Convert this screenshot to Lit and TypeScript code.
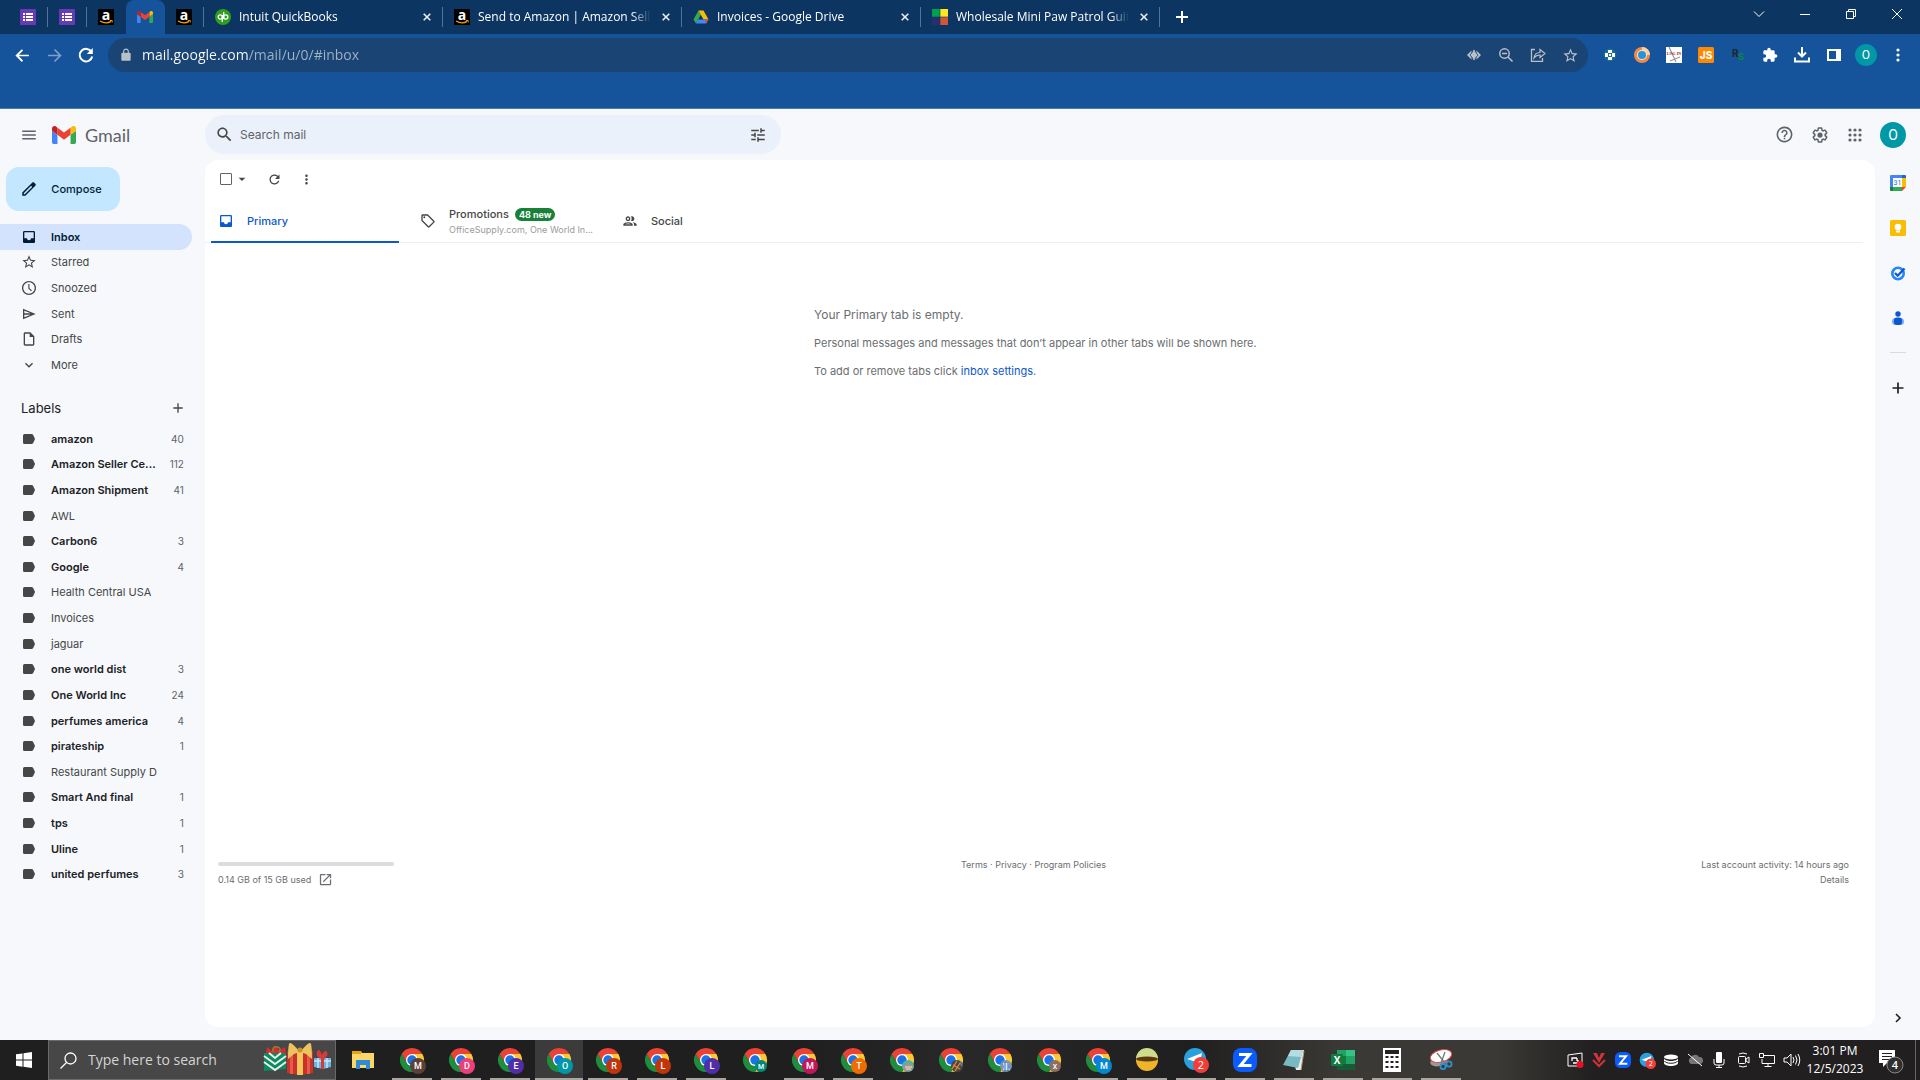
import { LitElement, html, svg, css, nothing } from "lit";
import { customElement } from "lit/decorators.js";

const P = {
  menu: "M3 18h18v-2H3v2zm0-5h18v-2H3v2zm0-7v2h18V6H3z",
  search:
    "M15.5 14h-.79l-.28-.27C15.41 12.59 16 11.11 16 9.5 16 5.91 13.09 3 9.5 3S3 5.91 3 9.5 5.91 16 9.5 16c1.61 0 3.09-.59 4.23-1.57l.27.28v.79l5 4.99L20.49 19l-4.99-5zm-6 0C7.01 14 5 11.99 5 9.5S7.01 5 9.5 5 14 7.01 14 9.5 11.99 14 9.5 14z",
  tune: "M3 17v2h6v-2H3zM3 5v2h10V5H3zm10 16v-2h8v-2h-8v-2h-2v6h2zM7 9v2H3v2h4v2h2V9H7zm14 4v-2H11v2h10zm-6-4h2V7h4V5h-4V3h-2v6z",
  help: "M11 18h2v-2h-2v2zm1-16C6.48 2 2 6.48 2 12s4.48 10 10 10 10-4.48 10-10S17.52 2 12 2zm0 18c-4.41 0-8-3.59-8-8s3.59-8 8-8 8 3.59 8 8-3.59 8-8 8zm0-14c-2.21 0-4 1.79-4 4h2c0-1.1.9-2 2-2s2 .9 2 2c0 2-3 1.75-3 5h2c0-2.25 3-2.5 3-5 0-2.21-1.79-4-4-4z",
  gear: "M13.85 22.25h-3.7c-.74 0-1.36-.54-1.45-1.27l-.27-1.89c-.27-.14-.53-.29-.79-.46l-1.8.72c-.7.26-1.47-.03-1.81-.65L2.2 15.53c-.35-.66-.2-1.44.36-1.88l1.53-1.19c-.01-.15-.02-.3-.02-.46 0-.15.01-.31.02-.46l-1.52-1.19c-.59-.45-.74-1.26-.37-1.88l1.85-3.19c.34-.62 1.11-.9 1.79-.63l1.81.73c.26-.17.52-.32.78-.46l.27-1.91c.09-.7.71-1.25 1.44-1.25h3.7c.74 0 1.36.54 1.45 1.27l.27 1.89c.27.14.53.29.79.46l1.8-.72c.71-.26 1.48.03 1.82.65l1.84 3.18c.36.66.2 1.44-.36 1.88l-1.52 1.19c.01.15.02.3.02.46s-.01.31-.02.46l1.52 1.19c.56.45.72 1.23.37 1.86l-1.86 3.22c-.34.62-1.11.9-1.8.63l-1.8-.72c-.26.17-.52.32-.78.46l-.27 1.91c-.1.68-.72 1.22-1.46 1.22zm-3.23-2h2.76l.37-2.55.53-.22c.44-.18.88-.44 1.34-.78l.45-.34 2.38.96 1.38-2.4-2.03-1.58.07-.56c.03-.26.06-.51.06-.78s-.03-.53-.06-.78l-.07-.56 2.03-1.58-1.39-2.4-2.39.96-.45-.35c-.42-.32-.87-.58-1.33-.77l-.52-.22-.37-2.55h-2.76l-.37 2.55-.53.21c-.44.19-.88.44-1.34.79l-.45.33-2.38-.95-1.39 2.39 2.03 1.58-.07.56a7 7 0 0 0-.06.79c0 .26.02.53.06.78l.07.56-2.03 1.58 1.38 2.4 2.39-.96.45.35c.43.33.86.58 1.33.77l.53.22.38 2.55zM12 8.5a3.5 3.5 0 1 0 0 7 3.5 3.5 0 0 0 0-7z",
  inbox: "M19 3H5c-1.1 0-2 .9-2 2v14c0 1.1.9 2 2 2h14c1.1 0 2-.9 2-2V5c0-1.1-.9-2-2-2zm0 11h-4c0 1.66-1.35 3-3 3s-3-1.34-3-3H5V5h14v9z",
  star: "M22 9.24l-7.19-.62L12 2 9.19 8.63 2 9.24l5.46 4.73L5.82 21 12 17.27 18.18 21l-1.63-7.03L22 9.24zM12 15.4l-3.76 2.27 1-4.28-3.32-2.88 4.38-.38L12 6.1l1.71 4.04 4.38.38-3.32 2.88 1 4.28L12 15.4z",
  clock: "M12 1.5C6.2 1.5 1.5 6.2 1.5 12S6.2 22.5 12 22.5 22.5 17.8 22.5 12 17.8 1.5 12 1.5zm0 19c-4.7 0-8.5-3.8-8.5-8.5S7.3 3.5 12 3.5s8.5 3.8 8.5 8.5-3.8 8.5-8.5 8.5zM12.7 6H11v7l4.2 3.8 1.2-1.3-3.7-3.3z",
  send: "M3 4v16l19-8L3 4zm2 3l9.5 4H5V7zm0 10v-4h9.5L5 17z",
  draft: "M14 2H6c-1.1 0-2 .9-2 2v16c0 1.1.89 2 1.99 2H18c1.1 0 2-.9 2-2V8l-6-6zM6 20V4h7v5h5v11H6z",
  more: "M16.59 8.59L12 13.17 7.41 8.59 6 10l6 6 6-6z",
  plus: "M19 13h-6v6h-2v-6H5v-2h6V5h2v6h6v2z",
  caret: "M7 10l5 5 5-5z",
  refresh: "M17.65 6.35C16.2 4.9 14.21 4 12 4c-4.42 0-7.99 3.58-7.99 8s3.57 8 7.99 8c3.73 0 6.84-2.55 7.73-6h-2.08c-.82 2.33-3.04 4-5.65 4-3.31 0-6-2.69-6-6s2.69-6 6-6c1.66 0 3.14.69 4.22 1.78L13 11h7V4l-2.35 2.35z",
  dots: "M12 8c1.1 0 2-.9 2-2s-.9-2-2-2-2 .9-2 2 .9 2 2 2zm0 2c-1.1 0-2 .9-2 2s.9 2 2 2 2-.9 2-2-.9-2-2-2zm0 6c-1.1 0-2 .9-2 2s.9 2 2 2 2-.9 2-2-.9-2-2-2z",
  tag: "M21.41 11.58l-9-9C12.05 2.22 11.55 2 11 2H4c-1.1 0-2 .9-2 2v7c0 .55.22 1.05.59 1.42l9 9c.36.36.86.58 1.41.58s1.05-.22 1.41-.59l7-7c.37-.36.59-.86.59-1.41s-.23-1.06-.59-1.42zM13 20.01L4 11V4h7v-.01l9 9-7 7.02zM6.5 5a1.5 1.5 0 1 0 0 3 1.5 1.5 0 0 0 0-3z",
  people:
    "M9 13.75c-2.34 0-7 1.17-7 3.5V19h14v-1.75c0-2.33-4.66-3.5-7-3.5zM4.34 17c.84-.58 2.87-1.25 4.66-1.25s3.82.67 4.66 1.25H4.34zM9 12c1.93 0 3.5-1.57 3.5-3.5S10.93 5 9 5 5.5 6.57 5.5 8.5 7.07 12 9 12zm0-5c.83 0 1.5.67 1.5 1.5S9.83 10 9 10s-1.5-.67-1.5-1.5S8.17 7 9 7zm7.04 6.81c1.16.84 1.96 1.96 1.96 3.44V19h4v-1.75c0-2.02-3.5-3.17-5.96-3.44zM15 12c1.93 0 3.5-1.57 3.5-3.5S16.93 5 15 5c-.54 0-1.04.13-1.5.35.63.89 1 1.98 1 3.15s-.37 2.26-1 3.15c.46.22.96.35 1.5.35z",
  open: "M19 19H5V5h7V3H5c-1.11 0-2 .9-2 2v14c0 1.1.89 2 2 2h14c1.1 0 2-.9 2-2v-7h-2v7zM14 3v2h3.59l-9.83 9.83 1.41 1.41L19 6.41V10h2V3h-7z",
  pencil: "M20.41 4.94l-1.35-1.35c-.78-.78-2.05-.78-2.83 0L3 16.82V21h4.18L20.41 7.77c.79-.78.79-2.05 0-2.83zM6.41 19.06L5 19v-1.36l9.82-9.82 1.41 1.41-9.82 9.83z",
  back: "M21 10.8H6.8l6-6L11 3 2 12l9 9 1.8-1.8-6-6H21z",
  lock: "M18 8h-1V6c0-2.76-2.24-5-5-5S7 3.24 7 6v2H6c-1.1 0-2 .9-2 2v10c0 1.1.9 2 2 2h12c1.1 0 2-.9 2-2V10c0-1.1-.9-2-2-2zM9 6c0-1.66 1.34-3 3-3s3 1.34 3 3v2H9V6z",
  puzzle:
    "M20.5 11H19V7c0-1.1-.9-2-2-2h-4V3.5C13 2.12 11.88 1 10.5 1S8 2.12 8 3.5V5H4c-1.1 0-1.99.9-1.99 2v3.8H3.5c1.49 0 2.7 1.21 2.7 2.7s-1.21 2.7-2.7 2.7H2V20c0 1.1.9 2 2 2h3.8v-1.5c0-1.49 1.21-2.7 2.7-2.7 1.49 0 2.7 1.21 2.7 2.7V22H17c1.1 0 2-.9 2-2v-4h1.5c1.38 0 2.5-1.12 2.5-2.5S21.88 11 20.5 11z",
};

const icon = (name: keyof typeof P, size = 16) =>
  html`<svg width=${size} height=${size} viewBox="0 0 24 24" fill="currentColor" aria-hidden="true"><path d=${P[name]} /></svg>`;

const draw = (w: number, h: number, body: unknown) =>
  html`<svg width=${w} height=${h} viewBox="0 0 ${w} ${h}" fill="none" aria-hidden="true">${body}</svg>`;

const gmailMark = (w: number, h: number) => html`<svg width=${w} height=${h} viewBox="52 42 88 66" aria-hidden="true">
  <path fill="#4285f4" d="M58 108h14V74L52 59v43c0 3.32 2.69 6 6 6" />
  <path fill="#34a853" d="M120 108h14c3.32 0 6-2.69 6-6V59l-20 15" />
  <path fill="#fbbc04" d="M120 48v26l20-15v-8c0-7.42-8.47-11.65-14.4-7.2" />
  <path fill="#ea4335" d="M72 74V48l24 18 24-18v26L96 92" />
  <path fill="#c5221f" d="M52 51v8l20 15V48l-5.6-4.2c-5.94-4.45-14.4-.22-14.4 7.2" />
</svg>`;

const forms = draw(16, 16, svg`<rect width="16" height="16" rx="1" fill="#673ab7"/><path d="M3 4h2v2H3zM6 4h7v2H6zM3 7h2v2H3zM6 7h7v2H6zM3 10h2v2H3zM6 10h7v2H6z" fill="#fff"/>`);
const amazon = draw(16, 16, svg`<rect width="16" height="16" fill="#000"/><text x="8" y="11" text-anchor="middle" font-family="Open Sans" font-weight="700" font-size="14" fill="#fff">a</text><path d="M2 12q6 3.6 11 .4" stroke="#f90" stroke-width="1.3"/><path d="M12 11.500h2.200v2" stroke="#f90"/>`);
const quickbooks = draw(16, 16, svg`<circle cx="8" cy="8" r="8" fill="#2ca01c"/><g stroke="#fff" stroke-width="1.3"><circle cx="5.3" cy="8" r="2.1"/><circle cx="10.7" cy="8" r="2.1"/><path d="M7.300 6v7M8.700 3v7"/></g>`);
const drive = draw(16, 16, svg`<path d="M5.500 1.500L.5 10.500l2.500 4 5-9z" fill="#34a853"/><path d="M5.500 1.500h5l5 9h-5z" fill="#fbbc04"/><path d="M5 10.500h10.500l-2.500 4H3z" fill="#4285f4"/><path d="M12.500 10.500h3l-2.500 4z" fill="#ea4335"/>`);
const squares = draw(16, 16, svg`<path d="M0 0h8v8H0z" fill="#00a050"/><path d="M8 0h8v8H8z" fill="#fce91c"/><path d="M0 8h8v8H0z" fill="#27306c"/><path d="M8 8h8v8H8z" fill="#d0553a"/><path d="M0 8h16M8 0v16" stroke="#0c3561" stroke-opacity=".6"/>`);
const closeX = draw(8, 8, svg`<path d="M.7 .7l6.600 6.600M7.300 .7L.7 7.300" stroke="#e8eef5" stroke-width="1.6"/>`);

@customElement("browser-frame")
export class BrowserFrame extends LitElement {
  static styles = css`
    :host { display: block; font-family: "Open Sans", "Noto Sans", sans-serif; color: #fff; }
    button { all: unset; box-sizing: border-box; display: flex; align-items: center; justify-content: center; cursor: pointer; }
    svg { display: block; flex: none; overflow: visible; }
    .strip { display: flex; height: 34px; background: #0c3561; padding-left: 9px; }
    .tab { display: flex; align-items: center; width: 39px; padding-left: 11px; box-sizing: border-box; height: 34px; }
    .tab .edge { width: 1px; height: 20px; background: #56728f; margin-left: auto; }
    .tab.active { background: #15539a; border-radius: 8px 8px 0 0; }
    .tab.wide { width: 239px; }
    .title { flex: 1; margin-left: 8px; font-size: 12px; line-height: 20px; white-space: nowrap; overflow: hidden; min-width: 0; mask-image: linear-gradient(90deg, #000 154px, transparent 173px); }
    .tab.wide .close { width: 16px; height: 16px; margin: 0 7px; }
    .add { width: 44px; }
    .window { margin-left: auto; display: flex; height: 28px; }
    .window button { width: 46px; }
    .bar { display: flex; align-items: center; height: 42px; background: #15539a; padding-left: 6px; }
    .bar > button { width: 32px; height: 32px; }
    .omni { flex: 1; display: flex; align-items: center; height: 34px; border-radius: 17px; background: #194473; margin-left: 6px; padding: 0 2px 0 11px; color: #b9c0c8; }
    .omni button { width: 32px; height: 32px; }
    .url { all: unset; flex: 1; margin-left: 9px; font-size: 14px; line-height: 20px; color: transparent; background: linear-gradient(90deg, #fff 106px, #a3b4c7 106px); background-clip: text; -webkit-background-clip: text; }
    .ext { display: flex; padding: 0 6px; }
    .ext button { width: 32px; height: 32px; }
    .face { width: 22px; height: 22px; border-radius: 50%; background: #0097a7; font-family: Roboto, sans-serif; font-size: 12px; line-height: 22px; text-align: center; }
    .shelf { height: 32px; background: #15539a; border-bottom: 1px solid #4a7ab2; }
  `;

  private tab(glyph: unknown, title: string, state = "") {
    return html`<div class="tab ${title ? "wide" : ""} ${state}">
      ${glyph}
      ${title ? html`<span class="title">${title}</span><button class="close" aria-label="Close tab">${closeX}</button>` : nothing}
      ${state ? nothing : html`<span class="edge"></span>`}
    </div>`;
  }

  render() {
    return html`
      <div class="strip">
        ${this.tab(forms, "")} ${this.tab(forms, "")} ${this.tab(amazon, "", "last")}
        ${this.tab(gmailMark(16, 12), "", "active")} ${this.tab(amazon, "")}
        ${this.tab(quickbooks, "Intuit QuickBooks")} ${this.tab(amazon, "Send to Amazon | Amazon Seller")}
        ${this.tab(drive, "Invoices - Google Drive")} ${this.tab(squares, "Wholesale Mini Paw Patrol Guitar")}
        <button class="add" aria-label="New tab">${draw(12, 12, svg`<path d="M6 0v12M0 6h12" stroke="#fff" stroke-width="2"/>`)}</button>
        <div class="window">
          <button aria-label="Search tabs">${draw(12, 12, svg`<path d="M1 3.500l5 5 5-5" stroke="#fff"/>`)}</button>
          <button aria-label="Minimize">${draw(10, 10, svg`<path d="M0 5.500h10" stroke="#fff"/>`)}</button>
          <button aria-label="Restore">${draw(10, 10, svg`<path d="M.5 2.500h7v7h-7zM2.500 2.500v-2h7v7h-2" stroke="#fff"/>`)}</button>
          <button aria-label="Close">${draw(10, 10, svg`<path d="M0 0l10 10M10 0L0 10" stroke="#fff"/>`)}</button>
        </div>
      </div>
      <div class="bar">
        <button aria-label="Back">${icon("back", 17)}</button>
        <button aria-label="Forward">${draw(17, 17, svg`<path d="M2 8.500h12M8.500 2.500l6 6-6 6" stroke="#7f9fc6" stroke-width="1.7"/>`)}</button>
        <button aria-label="Reload">${draw(16, 16, svg`<path d="M13.500 5A6.300 6.300 0 1 0 14.200 9.500" stroke="#fff" stroke-width="2"/><path d="M14.800 1v6H8.800z" fill="#fff"/>`)}</button>
        <div class="omni">
          ${icon("lock", 14)}
          <input class="url" aria-label="Address" value="mail.google.com/mail/u/0/#inbox" />
          <button aria-label="Tracking">${draw(14, 12, svg`<path d="M0 6l4.500-4.500v9zM14 6L9.500 1.500v9z" fill="currentColor"/><path d="M7 1l4 5-4 5-4-5z" fill="currentColor" stroke="#194473" stroke-width=".8"/><path d="M7 .5l1.500 2h-3zM7 11.500l1.500-2h-3z" fill="currentColor"/>`)}</button>
          <button aria-label="Zoom">${draw(14, 14, svg`<circle cx="5.5" cy="5.5" r="4.7" stroke="currentColor" stroke-width="1.5"/><path d="M9 9l4.500 4.500M3 5.500h5" stroke="currentColor" stroke-width="1.5"/>`)}</button>
          <button aria-label="Share">${draw(16, 14, svg`<path d="M5 1.500H1.500v11.800h11V10" stroke="currentColor" stroke-width="1.3"/><path d="M4 10c.5-4 3-5.500 6-5.500V1.500L15 5.500l-5 4V7C7 7 5.500 8 4 10z" stroke="currentColor" stroke-width="1.2"/>`)}</button>
          <button aria-label="Bookmark">${icon("star", 17)}</button>
        </div>
        <div class="ext">
          <button aria-label="Extension">${draw(16, 16, svg`<circle cx="8" cy="8" r="6.5" fill="#1b6b93"/><path d="M6 3h4v3h3v4h-3v3H6v-3H3V6h3z" fill="#fff"/><path d="M6 6h4v4H6z" fill="#1b6b93"/><path d="M7 7h2v2H7z" fill="#fff"/>`)}</button>
          <button aria-label="Extension">${draw(16, 16, svg`<circle cx="8" cy="8" r="8" fill="#f08a4b"/><path d="M8 0a8 8 0 0 1 8 8H12a4 4 0 0 0-4-4z" fill="#ffd0a0"/><circle cx="8" cy="8" r="5" fill="#ffe2c8"/><circle cx="8" cy="8" r="4" fill="#2196d8"/>`)}</button>
          <button aria-label="Log in">${draw(16, 16, svg`<rect width="16" height="16" fill="#fff"/><path d="M3 0l7 15M4 14l10-4" stroke="#999" stroke-width="1.2"/><text x="8" y="8" text-anchor="middle" font-family="Liberation Serif" font-weight="700" font-size="4" fill="#8c2020">LOG IN</text>`)}</button>
          <button aria-label="Extension">${draw(16, 16, svg`<rect width="16" height="16" rx="1.5" fill="#ff8800"/><text x="8" y="12" text-anchor="middle" font-family="Inter" font-weight="800" font-size="10" fill="#fff">JS</text>`)}</button>
          <button aria-label="Extension">${draw(16, 16, svg`<text x="2" y="10" font-family="Inter" font-weight="700" font-size="10" fill="#1d2530">R</text><text x="8" y="13" font-family="Inter" font-weight="700" font-size="9" fill="#0b8a3e">S</text>`)}</button>
          <button aria-label="Extensions">${icon("puzzle", 16)}</button>
          <button aria-label="Downloads">${draw(16, 16, svg`<path d="M8 0v9M4 5.500l4 4 4-4M1 10.500v4h14v-4" stroke="#fff" stroke-width="2"/>`)}</button>
          <button aria-label="Side panel">${draw(14, 14, svg`<path d="M1 2h12v10H1z" stroke="#fff" stroke-width="2"/><path d="M9 1h5v12H9z" fill="#fff"/>`)}</button>
          <button aria-label="Profile"><span class="face">O</span></button>
          <button aria-label="Menu">${draw(4, 14, svg`<circle cx="2" cy="2" r="1.6" fill="#fff"/><circle cx="2" cy="7" r="1.6" fill="#fff"/><circle cx="2" cy="12" r="1.6" fill="#fff"/>`)}</button>
        </div>
      </div>
      <div class="shelf"></div>
    `;
  }
}

const NAV: [keyof typeof P, string][] = [
  ["inbox", "Inbox"], ["star", "Starred"], ["clock", "Snoozed"], ["send", "Sent"], ["draft", "Drafts"], ["more", "More"],
];

const LABELS: [string, number][] = [
  ["amazon", 40], ["Amazon Seller Ce...", 112], ["Amazon Shipment", 41], ["AWL", 0], ["Carbon6", 3], ["Google", 4],
  ["Health Central USA", 0], ["Invoices", 0], ["jaguar", 0], ["one world dist", 3], ["One World Inc", 24],
  ["perfumes america", 4], ["pirateship", 1], ["Restaurant Supply D", 0], ["Smart And final", 1], ["tps", 1],
  ["Uline", 1], ["united perfumes", 3],
];

@customElement("mail-page")
export class MailPage extends LitElement {
  static styles = css`
    :host { display: grid; grid-template: 51px 1fr / 205px minmax(0, 1fr) 45px; padding-bottom: 13px; background: #f6f8fc; color: #444746; font-family: Inter, Roboto, sans-serif; font-size: 11px; line-height: 16px; }
    button { all: unset; box-sizing: border-box; display: flex; align-items: center; justify-content: center; cursor: pointer; }
    a { color: inherit; text-decoration: none; }
    svg { display: block; flex: none; overflow: visible; }
    .brand { display: flex; align-items: center; padding-left: 20px; }
    .brand button { width: 18px; color: #5f6368; }
    .brand a { display: flex; align-items: center; margin-left: 14px; gap: 9px; font-family: Lato, "Open Sans", sans-serif; font-size: 18px; line-height: 24px; color: #5f6368; }
    .top { grid-column: span 2; display: flex; align-items: center; padding-right: 14px; }
    .search { display: flex; align-items: center; height: 39px; border-radius: 20px; background: #eaf1fb; padding: 0 14px 0 10px; box-sizing: border-box; flex: 0 1 576px; }
    .search input { all: unset; flex: 1; margin-left: 6px; font-size: 12px; line-height: 20px; }
    .search input::placeholder { color: #5f6368; }
    .tools { display: flex; align-items: center; margin-left: auto; }
    .tools button { width: 35px; height: 35px; color: #5f6368; }
    .tools .face { width: 26px; height: 26px; border-radius: 50%; background: #0097a7; color: #fff; font-family: Roboto, sans-serif; font-size: 14px; margin-left: 8px; }
    .side { padding-top: 7px; }
    .compose { width: 114px; height: 44px; border-radius: 13px; background: #c2e7ff; color: #001d35; margin: 0 0 13px 6px; font-weight: 500; gap: 13px; padding-right: 4px; }
    .list { display: grid; grid-auto-rows: 1fr; }
    .nav { height: 154px; }
    .labels { height: 461px; }
    .row { display: grid; grid-template-columns: 16px 1fr auto; align-items: center; column-gap: 14px; padding: 0 10px 0 21px; margin-right: 13px; border-radius: 0 13px 13px 0; white-space: nowrap; }
    .row.on { background: #d3e3fd; color: #001d35; font-weight: 600; }
    .row.new { color: #202124; font-weight: 600; }
    .count { font-size: 10px; font-weight: 400; color: #5f6368; }
    .head { display: flex; align-items: center; justify-content: space-between; height: 24px; margin: 18px 19px 6px 21px; }
    .head h2 { margin: 0; font-size: 13px; font-weight: 400; color: #202124; }
    .main { display: flex; flex-direction: column; background: #fff; border-radius: 13px; }
    .actions { display: flex; align-items: center; height: 38px; padding-left: 13px; }
    .actions button { width: 32px; height: 32px; }
    .check { display: flex; align-items: center; }
    .check input { appearance: none; width: 12px; height: 12px; margin: 0 0 0 2px; border: 1px solid #5f6368; border-radius: 1px; outline: 0; }
    .check button { width: 26px; padding-right: 6px; }
    .tabs { display: flex; gap: 14px; margin: 2px 12px 0 0; padding-left: 6px; box-shadow: inset 0 -1px #eceff1; }
    .tabs button { width: 188px; height: 43px; justify-content: flex-start; gap: 13px; padding-left: 7px; border-bottom: 2px solid transparent; font-weight: 500; }
    .tabs .on { color: #0b57d0; border-color: #0b57d0; }
    .promo { display: grid; padding-top: 2px; }
    .promo span { display: flex; align-items: center; gap: 6px; }
    .promo b { background: #188038; color: #fff; border-radius: 7px; padding: 0 4px; font-size: 9px; line-height: 13px; font-weight: 700; }
    .promo small { font-size: 9px; line-height: 15px; font-weight: 400; color: #9a9c9e; white-space: nowrap; }
    .empty { display: flex; justify-content: center; padding: 58px 20px 0 0; color: #6b6e70; }
    .empty div { width: 432px; white-space: nowrap; line-height: 28px; }
    .empty p { margin: 0; }
    .empty .lead { font-size: 12px; }
    .empty a { color: #0b57d0; }
    .foot { display: grid; grid-template-columns: 1fr auto 1fr; margin-top: auto; padding: 0 26px 140px 13px; font-size: 9px; line-height: 15px; color: #6b6e70; }
    .quota { display: block; width: 176px; height: 4px; margin: 5px 0 6px; border-radius: 2px; background: #dadce0; }
    .used { display: flex; align-items: center; gap: 7px; }
    .last { text-align: right; }
    .rail { display: flex; flex-direction: column; align-items: center; }
    .rail button { width: 45px; height: 45px; color: #202124; }
    .rail hr { width: 16px; height: 1px; border: 0; margin: 12px 0; background: #dadcd8; }
    .rail .fold { height: 18px; margin-top: auto; }
  `;

  render() {
    return html`
      <div class="brand">
        <button aria-label="Main menu">${icon("menu", 18)}</button>
        <a href="#inbox">${gmailMark(24, 18)}<span>Gmail</span></a>
      </div>
      <div class="top">
        <form class="search" role="search">
          ${icon("search", 19)}
          <input aria-label="Search mail" placeholder="Search mail" />
          <button type="button" aria-label="Search options">${icon("tune", 18)}</button>
        </form>
        <div class="tools">
          <button aria-label="Support">${icon("help", 19)}</button>
          <button aria-label="Settings">${icon("gear", 18)}</button>
          <button aria-label="Google apps">
            ${draw(14, 14, [2, 7, 12].map((y) => [2, 7, 12].map((x) => svg`<circle cx=${x} cy=${y} r="1.6" fill="currentColor"/>`)))}
          </button>
          <button class="face" aria-label="Account">O</button>
        </div>
      </div>
      <aside class="side">
        <button class="compose">${icon("pencil", 18)}<span>Compose</span></button>
        <nav class="list nav">
          ${NAV.map(([g, t], i) => html`<a class="row ${i ? "" : "on"}" href="#${t}">${icon(g, 16)}<span>${t}</span></a>`)}
        </nav>
        <div class="head"><h2>Labels</h2><button aria-label="Create new label">${icon("plus", 16)}</button></div>
        <nav class="list labels">
          ${LABELS.map(
            ([t, n]) => html`<a class="row ${n ? "new" : ""}" href="#label">${draw(16, 16, svg`<path d="M2 4.500Q2 3 3.500 3h7q1 0 1.700 1L14 8l-1.800 4q-.7 1-1.700 1h-7Q2 13 2 11.500z" fill="#444746"/>`)}<span>${t}</span>${n ? html`<span class="count">${n}</span>` : nothing}</a>`
          )}
        </nav>
      </aside>
      <main class="main">
        <div class="actions">
          <div class="check"><input type="checkbox" aria-label="Select" /><button aria-label="Select options">${icon("caret", 16)}</button></div>
          <button aria-label="Refresh">${icon("refresh", 15)}</button>
          <button aria-label="More">${icon("dots", 15)}</button>
        </div>
        <div class="tabs" role="tablist">
          <button class="on" role="tab" aria-selected="true">${icon("inbox", 16)}<span>Primary</span></button>
          <button role="tab">
            ${icon("tag", 16)}
            <div class="promo"><span>Promotions <b>48 new</b></span><small>OfficeSupply.com, One World In...</small></div>
          </button>
          <button role="tab">${icon("people", 16)}<span>Social</span></button>
        </div>
        <section class="empty">
          <div>
            <p class="lead">Your Primary tab is empty.</p>
            <p>Personal messages and messages that don’t appear in other tabs will be shown here.</p>
            <p>To add or remove tabs click <a href="#settings">inbox settings</a>.</p>
          </div>
        </section>
        <footer class="foot">
          <div>
            <span class="quota"></span>
            <span class="used">0.14 GB of 15 GB used <a href="#storage" aria-label="Manage storage">${icon("open", 15)}</a></span>
          </div>
          <div><a href="#terms">Terms</a> · <a href="#privacy">Privacy</a> · <a href="#policies">Program Policies</a></div>
          <div class="last">Last account activity: 14 hours ago<br /><a href="#details">Details</a></div>
        </footer>
      </main>
      <aside class="rail">
        <button aria-label="Calendar">
          ${draw(16, 16, svg`<path d="M1 0h11v3H3v9H0V1q0-1 1-1z" fill="#4285f4"/><path d="M12 0h3q1 0 1 1v2h-4z" fill="#1967d2"/><path d="M12 3h4v9h-4z" fill="#fbbc04"/><path d="M3 12h9v4H3z" fill="#34a853"/><path d="M0 12h3v4H1q-1 0-1-1z" fill="#188038"/><path d="M12 12h4l-4 4z" fill="#ea4335"/><path d="M3 3h9v9H3z" fill="#fff"/><text x="7.5" y="10" text-anchor="middle" font-family="Roboto" font-size="7" fill="#1a73e8">31</text>`)}
        </button>
        <button aria-label="Keep">
          ${draw(16, 16, svg`<rect width="16" height="16" rx="1.5" fill="#fbbc04"/><circle cx="8" cy="7" r="3.3" fill="#fff"/><path d="M6 9h4v1.500H6zM6 11h4v1.500H6z" fill="#fff"/>`)}
        </button>
        <button aria-label="Tasks">
          ${draw(16, 16, svg`<circle cx="8" cy="8.5" r="5.7" stroke="#2684fc" stroke-width="2.6"/><path d="M5 8l2.700 2.700L14.500 3.500" stroke="#0b57d0" stroke-width="2.3"/>`)}
        </button>
        <button aria-label="Contacts">
          ${draw(16, 16, svg`<circle cx="8" cy="4" r="2.7" fill="#0b57d0"/><rect x="2" y="8" width="12" height="7" rx="3.5" fill="#7baaf7"/><rect x="4" y="7.5" width="8" height="7.5" rx="3" fill="#0b57d0"/>`)}
        </button>
        <hr />
        <button aria-label="Get add-ons">${draw(12, 12, svg`<path d="M6 .5v11M.5 6h11" stroke="#202124" stroke-width="1.7"/>`)}</button>
        <button class="fold" aria-label="Hide side panel">${draw(8, 10, svg`<path d="M2 1l4 4-4 4" stroke="#202124" stroke-width="1.6"/>`)}</button>
      </aside>
    `;
  }
}

const chrome = (letter: string, color: string, r = 8, extra: unknown = nothing) =>
  draw(30, 30, svg`<path d="M4.600 9A12 12 0 0 1 25.400 9H15L9.800 18Z" fill="#ea4335"/><path d="M25.400 9A12 12 0 0 1 15 27L20.200 18 15 9Z" fill="#fcc934"/><path d="M15 27A12 12 0 0 1 4.600 9L9.800 18H20.200Z" fill="#1e8e3e"/><circle cx="15" cy="15" r="6" fill="#fff"/><circle cx="15" cy="15" r="4.7" fill="#1a73e8"/><circle cx="21" cy="21" r=${r} fill=${color}/>${extra}<text x="21" y="24" text-anchor="middle" font-family="Roboto" font-weight="500" font-size=${r > 7 ? 9 : 7} fill="#fff">${letter}</text>`);

const zoomApp = (s: number) => html`<svg width=${s} height=${s} viewBox="0 0 24 24" fill="none" aria-hidden="true"><rect width="24" height="24" rx="8" fill="#0b5cff"/><path d="M6 6.500h10.500L7.500 17.500H18.500" stroke="#fff" stroke-width="3"/></svg>`;
const telegram = (s: number) => html`<svg width=${s} height=${s} viewBox="0 0 26 26" fill="none" aria-hidden="true"><circle cx="12" cy="12" r="11" fill="#2aa1de"/><path d="M4 12L19 6l-2.500 12-5-3.500z" fill="#fff"/><circle cx="18" cy="18" r="8" fill="#f03e3a"/><text x="18" y="22" text-anchor="middle" font-family="Open Sans" font-size="11" fill="#fff">2</text></svg>`;

interface Task { name: string; art: unknown; open: boolean; current?: boolean }

const TASKS: Task[] = [
  { name: "File Explorer", open: false, art: draw(22, 20, svg`<path d="M0 1h9l1 2h12v15H0z" fill="#fcd668"/><path d="M0 1h9v3H0z" fill="#e2a50c"/><path d="M4 10h14v9h-4v-4H8v4H4z" fill="#2e8bd8"/>`) },
  { name: "Chrome M", open: true, art: chrome("M", "#5d4037") },
  { name: "Chrome D", open: true, art: chrome("D", "#ec407a") },
  { name: "Chrome E", open: true, art: chrome("E", "#512da8") },
  { name: "Chrome O", open: true, current: true, art: chrome("O", "#0097a7") },
  { name: "Chrome R", open: true, art: chrome("R", "#bf360c") },
  { name: "Chrome L", open: true, art: chrome("L", "#bf360c") },
  { name: "Chrome L2", open: true, art: chrome("L", "#512da8") },
  { name: "Chrome M2", open: false, art: chrome("M", "#00897b", 6) },
  { name: "Chrome M3", open: true, art: chrome("M", "#c2185b") },
  { name: "Chrome T", open: true, art: chrome("T", "#ef6c00") },
  { name: "Chrome A", open: false, art: chrome("", "#4fb3a9", 6, svg`<path d="M15.500 23l2-4 2 1 1.500-4 2 4 2-1 1.500 4-3 3h-5z" fill="#a8958a"/><path d="M18 22h7M19 24h5" stroke="#e8e0d8"/>`) },
  { name: "Chrome B", open: false, art: chrome("", "#4a4542", 6, svg`<path d="M16 24l5-8M19 26l5-8M17 20l7 4" stroke="#d98a35" stroke-width="1.4"/><path d="M24 17l2 4" stroke="#6f86b0" stroke-width="1.5"/>`) },
  { name: "Chrome C", open: false, art: chrome("", "#7d95b5", 6, svg`<path d="M18 18l6 0-1 4 2 3h-7l1-3z" fill="#d7e6f6"/><path d="M20 17v9M23 18v8" stroke="#3971c2"/>`) },
  { name: "Chrome X", open: false, art: chrome("X", "#8d6e63", 6) },
  { name: "Chrome M4", open: true, art: chrome("M", "#0288d1") },
  { name: "Drum", open: true, art: draw(24, 24, svg`<circle cx="12" cy="12" r="11" fill="#f0b429"/><path d="M1 11A11 11 0 0 1 23 11z" fill="#cfdc8c"/><ellipse cx="12" cy="11" rx="11" ry="2.6" fill="#5b3a12"/>`) },
  { name: "Telegram", open: true, art: telegram(26) },
  { name: "Zoom", open: true, art: zoomApp(24) },
  { name: "Notepad", open: true, art: draw(24, 24, svg`<path d="M9 2h13l-3 20H14z" fill="#e8eef0"/><path d="M9 2h12l-5 18-15-3z" fill="#79b9c4"/><path d="M9 2h12l-2 7-13-1z" fill="#b4dde2"/><path d="M22 3l-3 19" stroke="#b09a70"/>`) },
  { name: "Excel", open: true, art: draw(24, 24, svg`<path d="M6 2h9v7H6z" fill="#21a366"/><path d="M15 2h9v7h-9z" fill="#33c481"/><path d="M6 8h9v8H6z" fill="#107c41"/><path d="M15 8h9v8h-9z" fill="#21a366"/><path d="M6 16h18v6H6z" fill="#185c37"/><rect y="6" width="12" height="12" rx="1" fill="#107c41"/><text x="6" y="16" text-anchor="middle" font-family="Open Sans" font-weight="700" font-size="10" fill="#fff">X</text>`) },
  { name: "Calculator", open: true, art: draw(18, 24, svg`<path d="M0 0h18v24H0z" fill="#fff"/><path d="M2 2h14v4H2z" fill="#222"/><path d="M2.500 9h3M7.500 9h3M12.500 9h3M2.500 14h3M7.500 14h3M12.500 14h3M2.500 19h3M7.500 19h3M12.500 19h3" stroke="#222" stroke-width="2"/>`) },
  { name: "Snipping Tool", open: true, art: draw(24, 24, svg`<ellipse cx="10" cy="13" rx="9" ry="5" fill="#999" transform="rotate(-15 10 13)"/><ellipse cx="12" cy="8" rx="11" ry="6" fill="#fff" stroke="#e04848" transform="rotate(-15 12 8)"/><path d="M8 5l8 10M16 4l-4 11" stroke="#777" stroke-width="1.3"/><circle cx="14" cy="18.5" r="2.6" stroke="#2f8fd0" stroke-width="1.8"/><circle cx="20" cy="16" r="2.6" stroke="#2f8fd0" stroke-width="1.8"/>`) },
];

const TRAY: unknown[] = [
  draw(16, 16, svg`<path d="M1 3l14-2v13H1z" stroke="#fff"/><path d="M5 9V6h5M10 6v3M11 8v3H6" stroke="#fff" stroke-width="1.3"/><circle cx="13" cy="12.5" r="3.5" fill="#e81123"/>`),
  draw(14, 16, svg`<path d="M1 1h4l2 5 2-5h4L7 11z" fill="#d13438"/><path d="M1 8l6 6 6-6" stroke="#d13438" stroke-width="2"/>`),
  zoomApp(16),
  telegram(17),
  draw(16, 16, svg`<ellipse cx="8" cy="5" rx="7" ry="2.5" fill="#fff"/><path d="M1 6v5c0 4 14 4 14 0V6c0 4-14 4-14 0z" fill="#fff"/><path d="M1.500 9c1 3 12 3 13 0" stroke="#222"/>`),
  draw(16, 16, svg`<path d="M4 12a3.500 3.500 0 0 1 0-6.500 4.500 4.500 0 0 1 8-.5 3.500 3.500 0 0 1 1 7z" fill="#777"/><path d="M1 2l14 12" stroke="#fff"/>`),
  draw(12, 16, svg`<rect x="3" width="6" height="11" rx="1" fill="#fff"/><path d="M1 7v4q0 2 2 2h6q2 0 2-2V7M6 13v3M3 15.500h6" stroke="#fff"/>`),
  draw(14, 16, svg`<rect x="2.5" y="4.5" width="7" height="7" rx="1" stroke="#fff"/><path d="M10 7l3-2v6l-3-2zM3 2q4-2 8 0M3 14q4 2 8 0" stroke="#fff"/>`),
  draw(16, 16, svg`<path d="M5 3.500h10.500v8H3V7M9 12v3M5.500 14.500h7M.5 1.500h4v4h-4z" stroke="#fff"/>`),
  draw(17, 16, svg`<path d="M1 6h3l4-4v12L4 10H1zM10 5q2 3 0 6M12.500 3.500q3 4.500 0 9M15 2q3.500 6 0 12" stroke="#fff"/>`),
];

@customElement("task-bar")
export class TaskBar extends LitElement {
  static styles = css`
    :host { display: flex; height: 40px; background: linear-gradient(90deg, #1f1f1f 0 42%, #282828 50%, #201f1f 62%, #3a3935 70%, #3a3935 78%, #221f20 83%); font-family: "Open Sans", "Noto Sans", sans-serif; color: #fff; }
    button { all: unset; box-sizing: border-box; display: flex; align-items: center; justify-content: center; cursor: pointer; flex: none; }
    svg { display: block; flex: none; overflow: visible; }
    .start { width: 48px; }
    .find { display: flex; align-items: center; width: 288px; flex: none; box-sizing: border-box; border: 1px solid #6a6a6a; background: #474747; padding: 0 3px 0 11px; margin-right: 3px; }
    .find input { all: unset; flex: 1; min-width: 0; margin-left: 11px; font-size: 14px; line-height: 20px; }
    .find input::placeholder { color: #d4d4d4; }
    .apps { display: flex; gap: 1px; }
    .apps button { width: 48px; height: 40px; border: solid transparent; border-width: 2px 0; }
    .apps .open { background: linear-gradient(#aaa6a1, #aaa6a1) center 38px / 40px 2px no-repeat border-box; }
    .apps .current { background: linear-gradient(#aaa6a1, #aaa6a1) center 38px / 48px 2px no-repeat border-box #3b3b3b; }
    .tray { display: flex; margin-left: auto; }
    .tray button { width: 24px; }
    .tray .clock { width: 64px; display: grid; align-content: center; text-align: center; font-size: 12px; line-height: 18px; }
    .tray .note { width: 49px; margin-right: 4px; border-right: 1px solid #666; }
  `;

  render() {
    return html`
      <button class="start" aria-label="Start">${draw(16, 16, svg`<path d="M0 2.300L6.500 1.400v6.200H0zM7.500 1.200L16 0v7.600H7.500zM0 8.500h6.500v6.200L0 13.800zM7.500 8.500H16V16l-8.500-1.200z" fill="#fff"/>`)}</button>
      <div class="find">
        ${draw(17, 17, svg`<circle cx="10.5" cy="6.5" r="5.5" stroke="#fff" stroke-width="1.3"/><path d="M6.500 10.500L.5 16.500" stroke="#fff" stroke-width="1.3"/>`)}
        <input aria-label="Search Windows" placeholder="Type here to search" />
        ${draw(68, 36, svg`
          <path d="M2 12l1-7 5 4 4-5 3 5 6-4 1 7z" fill="#d92b2b"/><path d="M9 10q-1-6 4-5t2 5" stroke="#9c7a3c" stroke-width="1.5"/>
          <path d="M0 11h22v16L0 29z" fill="#0d8a63"/><path d="M0 14l11 8 11-8M0 20l11 8 11-8M5 11l6 5 6-5" stroke="#e8f0ea" stroke-width="2"/>
          <path d="M23 9h26v22l-13 2-13-2z" fill="#cf2f2a"/><path d="M26 9h3v23h-3zM43 9h3v23h-3z" fill="#e35d48"/><path d="M33 9h6v24h-6z" fill="#f1c65b"/>
          <path d="M35 9Q26-2 25 2t-1 15l6-5 6-2zM37 9Q46-2 47 2t1 15l-6-5-6-2z" fill="#edc35f"/><circle cx="36" cy="8" r="2.500" fill="#c9942f"/>
          <path d="M50 16h17v9l-8 2-9-2z" fill="#6db3e0"/><path d="M50 19h17M54 16v10M63 16v10" stroke="#c7e4f6" stroke-width="1.5"/><path d="M57 16h3v11h-3z" fill="#d83a3a"/>
          <path d="M58 17q-7-2-5-7t5 3q3-6 5-3t-3 7z" fill="#d83a3a"/>`)}
      </div>
      <div class="apps">
        ${TASKS.map((t) => html`<button class=${t.current ? "current" : t.open ? "open" : ""} aria-label=${t.name}>${t.art}</button>`)}
      </div>
      <div class="tray">
        ${TRAY.map((g) => html`<button aria-label="Tray icon">${g}</button>`)}
        <button class="clock"><span>3:01 PM</span><span>12/5/2023</span></button>
        <button class="note" aria-label="Notifications">
          ${draw(26, 26, svg`<path d="M1 3h16v13h-8l-4 4v-4H1z" fill="#fff"/><path d="M4 6.500h10M4 9.500h10M4 12.500h7" stroke="#222"/><circle cx="17" cy="18" r="8" fill="#2f2f2f" stroke="#888"/><text x="17" y="22" text-anchor="middle" font-family="Open Sans" font-weight="600" font-size="11" fill="#fff">4</text>`)}
        </button>
      </div>
    `;
  }
}

@customElement("app-root")
export class AppRoot extends LitElement {
  static styles = css`
    :host { display: flex; flex-direction: column; min-height: 100vh; }
    mail-page { flex: 1; }
  `;

  render() {
    return html`<browser-frame></browser-frame><mail-page></mail-page><task-bar></task-bar>`;
  }
}
